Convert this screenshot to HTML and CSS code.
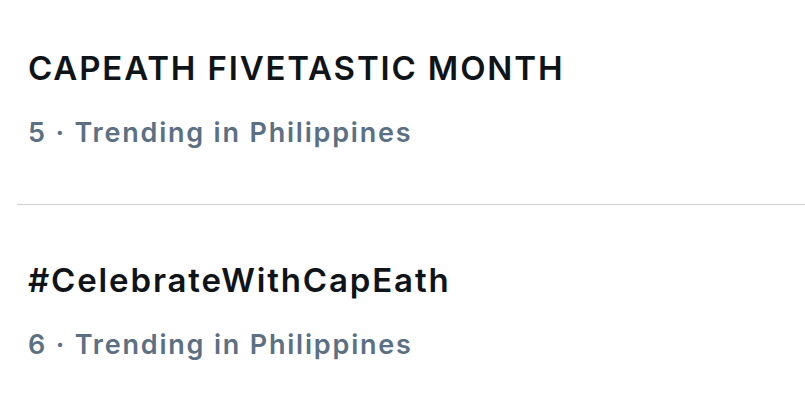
FILE: index.html
```html
<!DOCTYPE html>
<html>
<head>
<meta charset="utf-8">
<link rel="stylesheet" href="styles.css">
</head>
<body>
<div class="list">
  <div class="trend first">
    <div class="title">CAPEATH FIVETASTIC MONTH</div>
    <div class="meta">5 · Trending in Philippines</div>
  </div>
  <div class="divider"></div>
  <div class="trend second">
    <div class="title">#CelebrateWithCapEath</div>
    <div class="meta">6 · Trending in Philippines</div>
  </div>
</div>
</body>
</html>
```
FILE: styles.css
```css
html, body {
  margin: 0;
  padding: 0;
  background: #ffffff;
}
body {
  width: 805px;
  height: 409px;
  overflow: hidden;
  font-family: Inter, "Noto Sans", sans-serif;
}
.list {
  display: flex;
  flex-direction: column;
}
.trend {
  padding-left: 28px;
  display: flex;
  flex-direction: column;
}
.first {
  padding-top: 48px;
  padding-bottom: 55px;
}
.second {
  padding-top: 55px;
}
.title {
  font-size: 33px;
  font-weight: 600;
  letter-spacing: 1.85px;
  color: #0f1419;
  line-height: 40px;
  white-space: nowrap;
}
.meta {
  margin-top: 29px;
  font-size: 27px;
  font-weight: 600;
  letter-spacing: 1.8px;
  color: #5b7083;
  line-height: 32px;
  white-space: nowrap;
}
.divider {
  margin-left: 17px;
  height: 1px;
  background: #cfcfcf;
}
```
